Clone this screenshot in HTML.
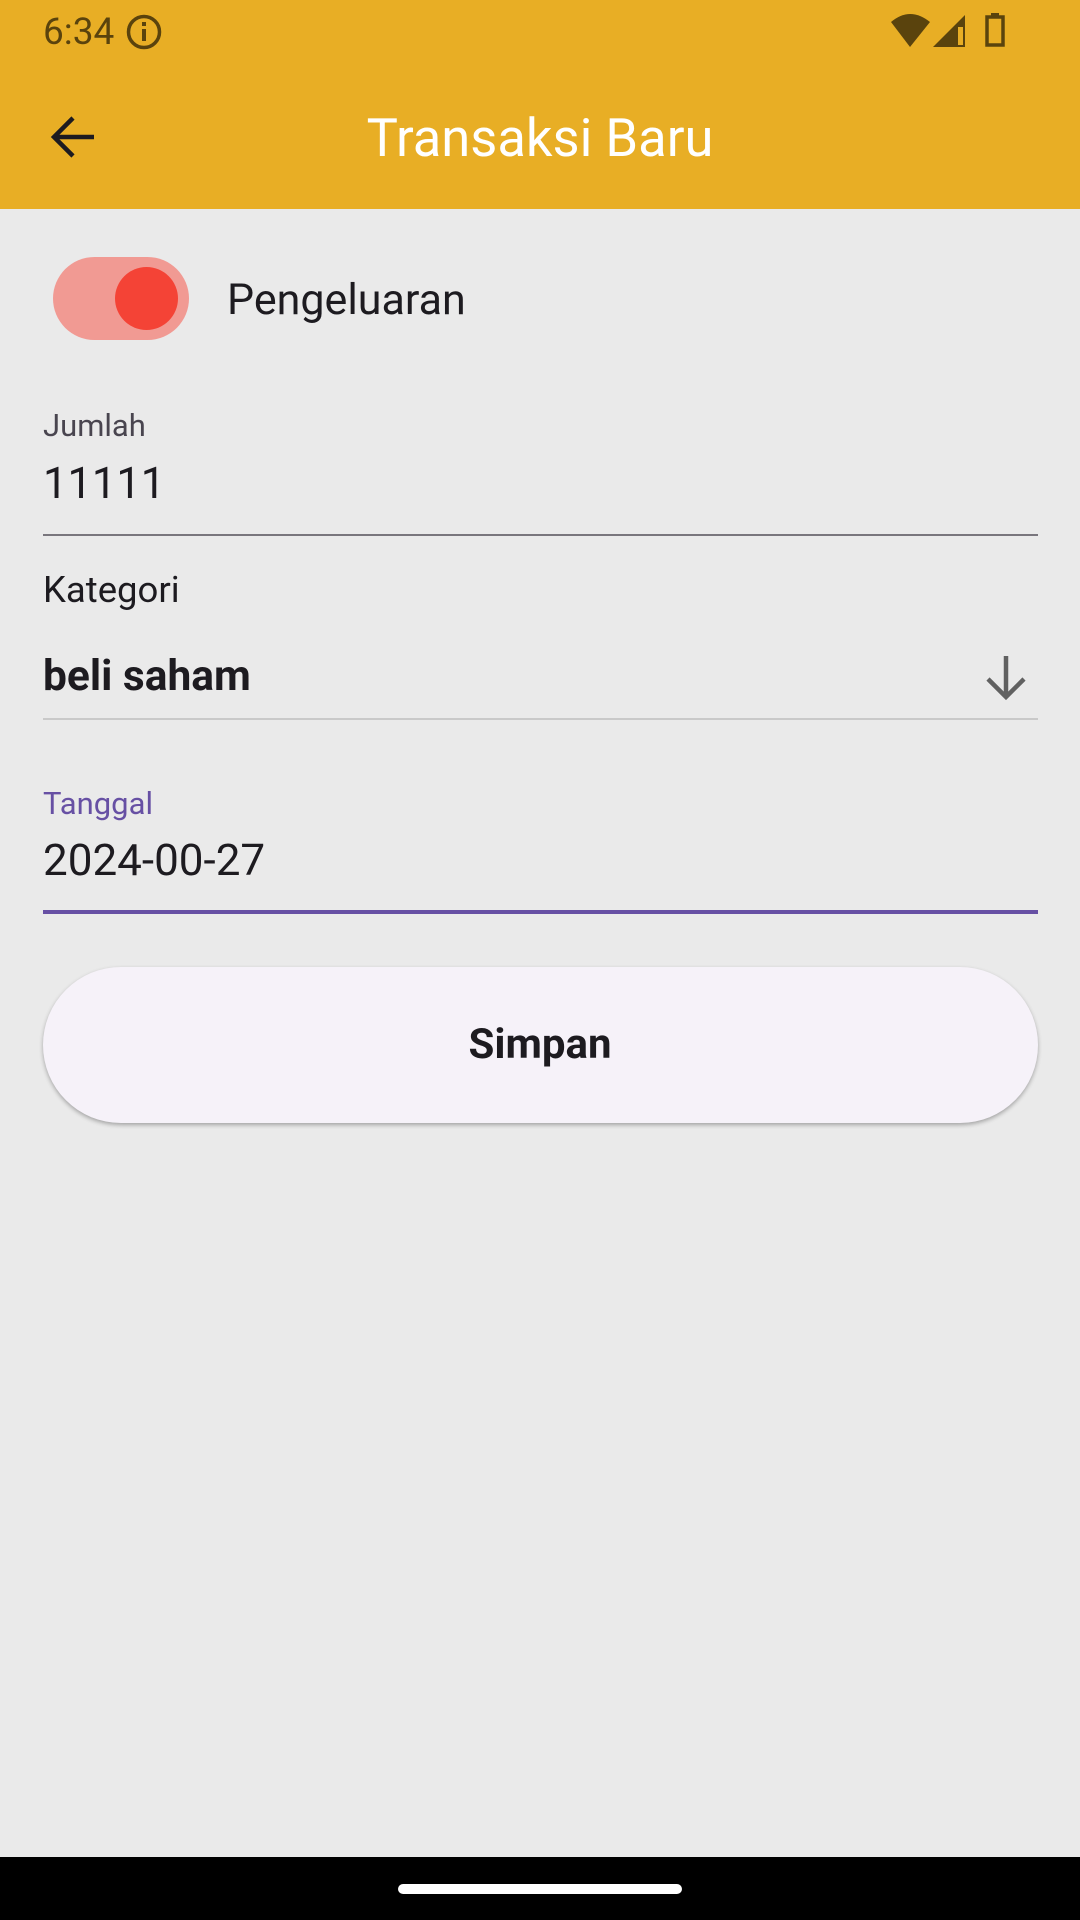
<!DOCTYPE html>
<html><head><meta charset="utf-8"><style>
*{margin:0;padding:0;box-sizing:border-box}
body{width:1080px;height:1920px;background:#eaeaea;font-family:"Roboto","Liberation Sans",sans-serif;position:relative;overflow:hidden}
.abs{position:absolute}
#bar{left:0;top:0;width:1080px;height:209px;background:#e8ae25}
.t{white-space:nowrap;line-height:1}
</style></head><body>
<div id="bar" class="abs"></div>
<div class="abs t" style="left:43px;top:14px;font-size:37px;color:#5a430d">6:34</div>
<svg class="abs" style="left:125px;top:13px" width="38" height="38" viewBox="0 0 38 38"><circle cx="19" cy="19" r="15.5" fill="none" stroke="#5a430d" stroke-width="3.5"/><rect x="17" y="16" width="4" height="12" fill="#5a430d"/><rect x="17" y="9" width="4" height="4" fill="#5a430d"/></svg>
<svg class="abs" style="left:880px;top:0" width="140" height="60" viewBox="0 0 140 60"><path d="M11 22 Q30 6 50 22 L30 47 Z" fill="#5a430d"/><path d="M53 47 L85 15 L85 47 Z" fill="#5a430d"/><rect x="78" y="27" width="5" height="18" fill="#e8ae25"/><rect x="107" y="17" width="16" height="28" fill="none" stroke="#5a430d" stroke-width="3.5"/><rect x="111" y="13" width="8" height="5" fill="#5a430d"/></svg>
<svg class="abs" style="left:50px;top:114px" width="48" height="46" viewBox="0 0 48 46"><path d="M44 23 H6 M23 4 L4 23 L23 42" fill="none" stroke="#1d1b20" stroke-width="4.5"/></svg>
<div class="abs t" style="left:0;width:1080px;text-align:center;top:112px;font-size:52.5px;color:#fff">Transaksi Baru</div>
<div class="abs" style="left:53px;top:257px;width:136px;height:83px;border-radius:42px;background:#f19a93"></div>
<div class="abs" style="left:115px;top:267px;width:63px;height:63px;border-radius:50%;background:#f44336"></div>
<div class="abs t" style="left:227px;top:279px;font-size:43px;color:#1d1b20">Pengeluaran</div>
<div class="abs t" style="left:43px;top:410px;font-size:31px;color:#49454f">Jumlah</div>
<div class="abs t" style="left:43px;top:462px;font-size:43.5px;color:#1d1b20">11111</div>
<div class="abs" style="left:43px;top:534px;width:995px;height:2px;background:#79767d"></div>
<div class="abs t" style="left:43px;top:572px;font-size:36.5px;color:#1d1b20">Kategori</div>
<div class="abs t" style="left:43px;top:656px;font-size:42.5px;font-weight:bold;color:#1d1b20">beli saham</div>
<svg class="abs" style="left:982px;top:652px" width="48" height="50" viewBox="0 0 48 50"><path d="M24 4 V44 M6 27 L24 45 L42 27" fill="none" stroke="#616161" stroke-width="4.5"/></svg>
<div class="abs" style="left:43px;top:718px;width:995px;height:1.5px;background:#c9c9c9"></div>
<div class="abs t" style="left:43px;top:788px;font-size:31px;color:#6750a4">Tanggal</div>
<div class="abs t" style="left:43px;top:838px;font-size:44px;color:#1d1b20">2024-00-27</div>
<div class="abs" style="left:43px;top:910px;width:995px;height:4px;background:#6750a4"></div>
<div class="abs" style="left:43px;top:967px;width:995px;height:156px;border-radius:78px;background:#f6f2f9;box-shadow:0 2px 4px rgba(0,0,0,.3)"></div>
<div class="abs t" style="left:0;width:1080px;text-align:center;top:1024px;font-size:42px;font-weight:bold;color:#1d1b20">Simpan</div>
<div class="abs" style="left:0;top:1857px;width:1080px;height:63px;background:#000"></div>
<div class="abs" style="left:398px;top:1884px;width:284px;height:10px;border-radius:5px;background:#fff"></div>
</body></html>
